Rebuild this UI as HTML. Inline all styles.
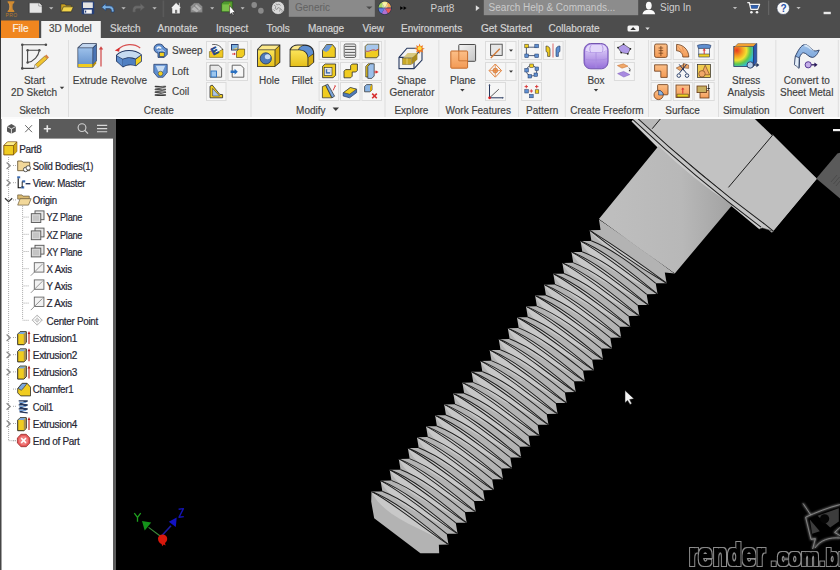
<!DOCTYPE html>
<html><head><meta charset="utf-8">
<style>
*{margin:0;padding:0;box-sizing:border-box}
html,body{width:840px;height:570px;overflow:hidden;background:#000}
body{position:relative;font-family:"Liberation Sans",sans-serif;font-size:10px}
.a{position:absolute}
</style></head>
<body>
<svg class="a" style="left:0;top:0" width="840" height="20" viewBox="0 0 840 20">
  <rect x="0" y="0" width="840" height="20" fill="#4d4d4d"/>
  <rect x="0" y="0" width="1" height="20" fill="#2c2c2c"/>
  <!-- inventor logo -->
  <path d="M7.6 1.2h6.8c.2 1.2-.4 2-1.6 2.8-.4 1.8-.4 3.6 0 5.4 1.2.8 1.8 1.6 1.6 2.6H7.6c-.2-1 .4-1.8 1.6-2.6.4-1.8.4-3.6 0-5.4-1.2-.8-1.8-1.6-1.6-2.8z" fill="#d08a30"/><path d="M9.6 3.6c.4 2 .4 4.4 0 6.2" stroke="#f0b060" stroke-width="0.6" fill="none"/>
  <text x="5.6" y="17.2" font-size="5" font-family="Liberation Sans" fill="#b57a30" letter-spacing="0.3">PRO</text>
  <!-- new -->
  <path d="M29.2 2.8h9.6l3.4 3.2v7.2H29.2z" fill="#e6e6e6" stroke="#262626" stroke-width="0.6"/>
  <path d="M38.8 2.8v3.2h3.4" fill="#fff" stroke="#555" stroke-width="0.5"/>
  <path d="M49 7.2h4.4l-2.2 2.3z" fill="#bcbcbc"/>
  <!-- open folder -->
  <path d="M60.8 4h4l1 1.2h5.4v6.6H60.8z" fill="#c9a020" stroke="#2a2a2a" stroke-width="0.6"/>
  <path d="M61.2 11.8l2.2-5h10l-2.2 5z" fill="#f2d44a" stroke="#2a2a2a" stroke-width="0.6"/>
  <!-- save -->
  <rect x="81.6" y="1.6" width="12.6" height="12.6" rx="1" fill="#26407a"/>
  <rect x="83" y="2.4" width="9.8" height="5.6" fill="#e4e4e4"/>
  <rect x="84.2" y="9.6" width="7.6" height="4" fill="#f4f4f4"/>
  <rect x="85" y="10.6" width="1.2" height="2" fill="#26407a"/>
  <!-- undo -->
  <path d="M101.6 7.2l4.2-3.6v2.2h3.6c2.8 0 4.6 1.8 4.6 4.6v1.6h-2.6v-1.4c0-1.2-.8-2-2-2h-3.6v2.2z" fill="#78aee0" stroke="#1e3c6c" stroke-width="0.7" stroke-linejoin="round"/>
  <path d="M121.4 7.2h4.3l-2.15 2.3z" fill="#bcbcbc"/>
  <!-- redo -->
  <path d="M144.6 7.2l-4.2-3.6v2.2h-3.6c-2.8 0-4 1.8-4 4.6v1.6h2.6v-1.4c0-1.2.4-2 1.6-2h3.4v2.2z" fill="#6a6a6a" stroke="#595959" stroke-width="0.5" stroke-linejoin="round"/>
  <path d="M152.4 7.2h4.3l-2.15 2.3z" fill="#bcbcbc"/>
  <rect x="162.6" y="0.5" width="1.6" height="16.6" fill="#5a5a5a"/>
  <!-- home -->
  <path d="M170.6 8.2l5.5-5.6 2.6 2.6V2.6h1.4v4l1.4 1.6h-1.4v5.6h-8.2V8.2z" fill="#f0f0f0" stroke="#2a2a2a" stroke-width="0.5"/>
  <rect x="175" y="9.8" width="2.2" height="4" fill="#777"/>
  <!-- gray icon -->
  <path d="M190.6 6.2l3.6-3.2h4.4l3.8 3.4v6h-11.8z" fill="#8e8e8e" stroke="#5a5a5a" stroke-width="0.5"/>
  <path d="M191.6 9.2l4.8-4.6 5 4.2-4.6 3.4z" fill="#b4b4b4"/>
  <path d="M194 5.6l4.6 4.4" stroke="#6a6a6a" stroke-width="0.8"/>
  <path d="M210.2 7.2h4l-2 2.2z" fill="#bcbcbc"/>
  <!-- green cube -->
  <path d="M221.4 3.4l2.8-2.2h8.4v8l-2.6 2.6h-8.6z" fill="#4f9a2f" stroke="#23461a" stroke-width="0.5"/>
  <rect x="222.2" y="4.4" width="7.6" height="6.8" fill="#7bc04a"/>
  <path d="M229.8 3.4v8l2.6-2.4" fill="none" stroke="#c8b020" stroke-width="0.8"/>
  <path d="M229.6 5.6v9.2l2-1.8 1.4 2.6 1-0.5-1.3-2.5 2.6-.2z" fill="#fff" stroke="#111" stroke-width="0.5"/>
  <path d="M240.6 7.2h4l-2 2.2z" fill="#bcbcbc"/>
  <!-- gray dots -->
  <ellipse cx="254.2" cy="5" rx="2.8" ry="3" fill="#8a8a8a"/>
  <ellipse cx="260.9" cy="10.7" rx="2.8" ry="3" fill="#8a8a8a"/>
  <!-- textured sphere -->
  <circle cx="278.1" cy="7.9" r="6.6" fill="#d8d8d8" stroke="#333" stroke-width="0.6"/>
  <path d="M274 5l2 1.5-1 2 2 1 1-2 2.5 1-1 3M276 3.5l1 1.5 2-1 1.5 1.5M281 9l1.5 2-1.5 1.5M273.5 9.5l1.5 1.5" fill="none" stroke="#888" stroke-width="0.8"/>
  <!-- generic -->
  <rect x="288.8" y="0" width="86" height="16.8" fill="#8a8a8a"/>
  <text x="295" y="11" font-size="10" font-family="Liberation Sans" fill="#626262">Generic</text>
  <path d="M366.2 6.4h6.2l-3.1 2.8z" fill="#4a4a4a"/>
  <!-- color wheel -->
  <circle cx="384.8" cy="7.9" r="6.8" fill="#1c2a4a"/>
  <path d="M384.8 7.9L378.6 7.9A6.2 6.2 0 0 1 381.7 2.5z" fill="#a8d860"/>
  <path d="M384.8 7.9L381.7 2.5A6.2 6.2 0 0 1 387.9 2.5z" fill="#f4ec80"/>
  <path d="M384.8 7.9L387.9 2.5A6.2 6.2 0 0 1 391 7.9z" fill="#f4a850"/>
  <path d="M384.8 7.9L391 7.9A6.2 6.2 0 0 1 387.9 13.3z" fill="#e85858"/>
  <path d="M384.8 7.9L387.9 13.3A6.2 6.2 0 0 1 381.7 13.3z" fill="#b070d0"/>
  <path d="M384.8 7.9L381.7 13.3A6.2 6.2 0 0 1 378.6 7.9z" fill="#6080e0"/>
  <path d="M378.6 7.9h12.4" stroke="#203070" stroke-width="0.8"/>
  <circle cx="384.8" cy="5.6" r="3" fill="#fff" opacity="0.35"/>
  <path d="M400.2 6.2l3 1.9-3 1.9zM403.6 6.2l3 1.9-3 1.9z" fill="#000"/>
  <text x="430.5" y="12" font-size="10" font-family="Liberation Sans" fill="#cfcfcf">Part8</text>
  <path d="M475.8 5.2l3.8 2.9-3.8 2.9z" fill="#e0e0e0"/>
  <!-- search -->
  <rect x="483.8" y="0" width="154.4" height="15.2" fill="#8c8c8c"/>
  <text x="488.6" y="11" font-size="10" font-family="Liberation Sans" fill="#cacaca">Search Help &amp; Commands...</text>
  <!-- person -->
  <ellipse cx="648.8" cy="5.6" rx="2.9" ry="3.9" fill="#fafafa"/>
  <path d="M642.4 14.2c.6-3 2.8-4.4 6.4-4.4s5.8 1.4 6.4 4.4z" fill="#fafafa"/>
  <text x="660" y="11.4" font-size="10" font-family="Liberation Sans" fill="#d0d0d0">Sign In</text>
  <path d="M732.9 7h4.2l-2.1 2.3z" fill="#bcbcbc"/>
  <!-- cart -->
  <path d="M747.3 2.6h2l1.6 6.6h6.8l1.8-4.8h-9.4" fill="none" stroke="#f4f4f4" stroke-width="1.4" stroke-linejoin="round"/>
  <path d="M750.6 5.2h8l-1.2 3.2h-6z" fill="#3060b0"/>
  <circle cx="751.4" cy="12.2" r="1.3" fill="#f4f4f4"/>
  <circle cx="757" cy="12.2" r="1.3" fill="#f4f4f4"/>
  <rect x="768.2" y="0.5" width="1" height="14.5" fill="#6a6a6a"/>
  <!-- help -->
  <circle cx="783.2" cy="8.2" r="6.3" fill="#f8f8f8" stroke="#26334a" stroke-width="0.6"/>
  <text x="780.4" y="12.2" font-size="10" font-weight="bold" font-family="Liberation Sans" fill="#1f4fa8">?</text>
  <path d="M796.4 7h4.3l-2.15 2.3z" fill="#bcbcbc"/>
  <rect x="823.6" y="11.8" width="7.2" height="2.4" fill="#e8e8e8"/>
</svg>
<svg class="a" style="left:0;top:20px" width="840" height="18" viewBox="0 20 840 18" font-family="Liberation Sans" font-size="10">
  <rect x="0" y="20" width="840" height="18" fill="#4d4d4d"/>
  <rect x="0" y="20" width="1" height="18" fill="#2c2c2c"/>
  <rect x="1" y="20.5" width="38" height="17.5" fill="#f0861f"/>
  <rect x="41.2" y="21" width="59.6" height="17" fill="#f3f3f3"/>
  <g fill="#d4d4d4" stroke="#d4d4d4" stroke-width="0.2">
    <text x="12.5" y="32.2" fill="#fbf0e2" stroke="#fbf0e2">File</text>
    <text x="49" y="32.2" fill="#4a4a4a" stroke="#4a4a4a">3D Model</text>
    <text x="110" y="32.2">Sketch</text>
    <text x="157.5" y="32.2">Annotate</text>
    <text x="216" y="32.2">Inspect</text>
    <text x="266.5" y="32.2">Tools</text>
    <text x="308" y="32.2">Manage</text>
    <text x="362.5" y="32.2">View</text>
    <text x="401" y="32.2">Environments</text>
    <text x="481" y="32.2">Get Started</text>
    <text x="548.5" y="32.2">Collaborate</text>
  </g>
  <rect x="627.5" y="25.5" width="11.5" height="6" rx="1.5" fill="#f4f4f4"/>
  <path d="M630.3 30h5.6l-2.8-3z" fill="#333"/>
  <path d="M645.3 27.6h4.4l-2.2 2.4z" fill="#e0e0e0"/>
</svg>

<svg class="a" style="left:0;top:0" width="840" height="120" viewBox="0 0 840 120" font-family="Liberation Sans" font-size="10">
  <rect x="0" y="38" width="840" height="79" fill="#f3f3f3"/>
  <rect x="0" y="117" width="840" height="2" fill="#fcfcfc"/>
  <rect x="0" y="38" width="1" height="81" fill="#3a3a3a"/>
  <!-- separators -->
  <g fill="#dedede">
    <rect x="68" y="40" width="1" height="77"/>
    <rect x="250.5" y="40" width="1" height="77"/>
    <rect x="384.5" y="40" width="1" height="77"/>
    <rect x="438.3" y="40" width="1" height="77"/>
    <rect x="518" y="40" width="1" height="77"/>
    <rect x="564.8" y="40" width="1" height="77"/>
    <rect x="648" y="40" width="1" height="77"/>
    <rect x="718" y="40" width="1" height="77"/>
    <rect x="775.3" y="40" width="1" height="77"/>
    <rect x="837.8" y="40" width="1" height="77"/>
  </g>
  <!-- small button frames -->
  <g fill="#f6f6f6" stroke="#dcdcdc" stroke-width="1">
    <rect x="206.5" y="41.5" width="19.5" height="18"/>
    <rect x="228" y="41.5" width="19.5" height="18"/>
    <rect x="206.5" y="62.5" width="19.5" height="18"/>
    <rect x="228" y="62.5" width="19.5" height="18"/>
    <rect x="206.5" y="82.5" width="19.5" height="18"/>

    <rect x="319.1" y="41.5" width="19.5" height="18"/>
    <rect x="340.5" y="41.5" width="19.5" height="18"/>
    <rect x="362" y="41.5" width="19.5" height="18"/>
    <rect x="319.1" y="62.5" width="19.5" height="18"/>
    <rect x="340.5" y="62.5" width="19.5" height="18"/>
    <rect x="362" y="62.5" width="19.5" height="18"/>
    <rect x="319.1" y="82.5" width="19.5" height="18"/>
    <rect x="340.5" y="82.5" width="19.5" height="18"/>
    <rect x="362" y="82.5" width="19.5" height="18"/>

    <rect x="485.5" y="41.5" width="30.5" height="18"/>
    <rect x="485.5" y="62.5" width="30.5" height="18"/>
    <rect x="485.5" y="82.5" width="20" height="18"/>

    <rect x="521.7" y="41.5" width="19.8" height="18"/>
    <rect x="543.3" y="41.5" width="19.8" height="18"/>
    <rect x="521.7" y="62.5" width="19.8" height="18"/>
    <rect x="521.7" y="82.5" width="19.8" height="18"/>

    <rect x="614.4" y="41.5" width="20" height="18"/>
    <rect x="614.4" y="62.5" width="20" height="18"/>

    <rect x="651.1" y="41.5" width="20" height="18"/>
    <rect x="673.3" y="41.5" width="19.5" height="18"/>
    <rect x="694.2" y="41.5" width="20" height="18"/>
    <rect x="651.1" y="62.5" width="20" height="18"/>
    <rect x="673.3" y="62.5" width="19.5" height="18"/>
    <rect x="694.2" y="62.5" width="20" height="18"/>
    <rect x="651.1" y="82.5" width="20" height="18"/>
    <rect x="673.3" y="82.5" width="19.5" height="18"/>
    <rect x="694.2" y="82.5" width="20" height="18"/>
  </g>
  <g fill="#dcdcdc">
    <rect x="505.2" y="42" width="1" height="17"/>
    <rect x="505.2" y="63" width="1" height="17"/>
  </g>

  <!-- texts -->
  <g fill="#404040" stroke="#404040" stroke-width="0.15" text-anchor="middle">
    <text x="34.5" y="83.8">Start</text>
    <text x="34" y="96.1">2D Sketch</text>
    <text x="34.5" y="114">Sketch</text>
    <text x="90" y="83.8">Extrude</text>
    <text x="129" y="83.8">Revolve</text>
    <text x="158.8" y="114">Create</text>
    <text x="269.2" y="83.8">Hole</text>
    <text x="302.3" y="83.8">Fillet</text>
    <text x="310.8" y="114">Modify</text>
    <text x="411.6" y="83.8">Shape</text>
    <text x="412" y="96.1">Generator</text>
    <text x="411.4" y="114">Explore</text>
    <text x="462.8" y="83.8">Plane</text>
    <text x="478.2" y="114">Work Features</text>
    <text x="542.2" y="114">Pattern</text>
    <text x="596" y="83.8">Box</text>
    <text x="606.9" y="114">Create Freeform</text>
    <text x="682.6" y="114">Surface</text>
    <text x="746.2" y="83.8">Stress</text>
    <text x="746.2" y="96.1">Analysis</text>
    <text x="746.3" y="114">Simulation</text>
    <text x="806.7" y="83.8">Convert to</text>
    <text x="806.7" y="96.1">Sheet Metal</text>
    <text x="806.6" y="114">Convert</text>
  </g>
  <g fill="#404040" stroke="#404040" stroke-width="0.15">
    <text x="172" y="54.3">Sweep</text>
    <text x="172" y="75.2">Loft</text>
    <text x="172" y="95.3">Coil</text>
  </g>
  <!-- dropdown arrows -->
  <g fill="#3a3a3a">
    <path d="M59.8 86.8h4.4l-2.2 2.4z"/>
    <path d="M332.6 107.6h6.4l-3.2 3.4z"/>
    <path d="M460.2 89h4.4l-2.2 2.4z"/>
    <path d="M593.8 89h4.4l-2.2 2.4z"/>
    <path d="M509 49.5h4l-2 2.2z"/>
    <path d="M509 70.5h4l-2 2.2z"/>
  </g>
</svg>

<svg class="a" style="left:0;top:0" width="840" height="120" viewBox="0 0 840 120">
  <defs>
    <linearGradient id="gBlue" x1="0" y1="0" x2="0" y2="1"><stop offset="0" stop-color="#9cc0ea"/><stop offset="1" stop-color="#6a96cf"/></linearGradient>
    <linearGradient id="gYel" x1="0" y1="0" x2="0" y2="1"><stop offset="0" stop-color="#fbe45a"/><stop offset="1" stop-color="#e6c01a"/></linearGradient>
    <linearGradient id="gOr" x1="0" y1="0" x2="0" y2="1"><stop offset="0" stop-color="#fbbf88"/><stop offset="1" stop-color="#f39a55"/></linearGradient>
    <linearGradient id="gPur" x1="0" y1="0" x2="0" y2="1"><stop offset="0" stop-color="#d6c4f6"/><stop offset="1" stop-color="#9d78dc"/></linearGradient>
    <linearGradient id="gGray" x1="0" y1="0" x2="1" y2="1"><stop offset="0" stop-color="#f4f4f4"/><stop offset="1" stop-color="#c4c4c4"/></linearGradient>
    <radialGradient id="gStress" cx="0.15" cy="0.2" r="1.1"><stop offset="0" stop-color="#e83a20"/><stop offset="0.25" stop-color="#f59a20"/><stop offset="0.45" stop-color="#f2e030"/><stop offset="0.62" stop-color="#5cc850"/><stop offset="0.8" stop-color="#30b8e0"/><stop offset="1" stop-color="#2050c0"/></radialGradient>
  </defs>
  <!-- Start 2D Sketch -->
  <g stroke="#4a4a4a" stroke-width="1.1" fill="none">
    <path d="M45.9 44.8H22.3V68.4H34"/>
    <path d="M39.4 50.2H27.6V62.5M39.4 50.2C38.5 56 34 61.5 27.6 62.5"/>
  </g>
  <g fill="#4a4a4a">
    <circle cx="22.3" cy="44.8" r="1.3"/><circle cx="45.9" cy="44.8" r="1.3"/><circle cx="22.3" cy="68.4" r="1.3"/>
    <circle cx="27.6" cy="50.2" r="1.2"/><circle cx="39.4" cy="50.2" r="1.2"/><circle cx="27.6" cy="62.5" r="1.2"/>
  </g>
  <path d="M34.2 68.2l1-3.6 9.6-8.6 2.6 2.8-9.6 8.6z" fill="#f0c430" stroke="#6a5020" stroke-width="0.6"/>
  <path d="M44.8 56l1.6-1.4 2.6 2.8-1.6 1.4z" fill="#d88040"/>
  <path d="M34.2 68.2l1-3.6 2.6 2.8z" fill="#f4f4f4" stroke="#777" stroke-width="0.4"/>

  <!-- Extrude -->
  <path d="M77.5 47.5l4.8-4.3h14.5v17.4l-3.8 6.8H77.5z" fill="#2a3a58"/>
  <path d="M78.2 48l4.4-4h13.6l-3.6 3.6H78.2z" fill="#c2d6ef"/>
  <rect x="78.2" y="48.2" width="14.3" height="15.8" fill="url(#gBlue)"/>
  <path d="M93.2 48l3-3v16l-3 3z" fill="#4a74b4"/>
  <rect x="78.2" y="64" width="14.3" height="3" fill="#f0cc20"/>
  <path d="M93.2 64l3-3v2.6l-3 3.4z" fill="#b89010"/>
  <path d="M101 66.4V48.2" stroke="#d04545" stroke-width="1.2"/>
  <path d="M98.8 49.6l2.2-3.4 2.2 3.4z" fill="#d04545"/>

  <!-- Revolve -->
  <path d="M118.2 49.6C124 43.4 134 43.2 140.2 48" stroke="#d85050" stroke-width="1.2" fill="none"/>
  <path d="M114.8 50.4l4.8-2.8-0.4 4.2z" fill="#d83030"/>
  <path d="M116 55C122 48.5 135 48.5 141.8 54.5V61.4L136 66.2C131 64.5 127 64.8 123 67.6L116 61.2z" fill="#1f3560"/>
  <path d="M116.8 55.4C122.5 49.6 134.8 49.6 141 54.8L135.6 58.6C131 56.6 127 56.8 122.6 58.8z" fill="#c6dbf0"/>
  <path d="M116.8 56L122.6 59.4V66.4L116.8 61z" fill="#5e8ccb"/>
  <path d="M122.8 59.6C127 57.6 131 57.6 135.4 59.6V65.5C131 64 127.2 64.2 122.8 66.6z" fill="#4f7fc2"/>
  <path d="M135.8 59.4L141 55.6V61.2L135.8 65.6z" fill="#f2d020"/>

  <!-- Sweep -->
  <path d="M154 48.6c0-3 2.3-4.6 5-4.6 2.4 0 4.2 1.2 4.8 3l2.4 1.8h1v5.6l-3 3h-6.2v-4.2c-2.4-.6-4-2.2-4-4.6z" fill="#5f8fd0" stroke="#1f3562" stroke-width="0.8" stroke-linejoin="round"/>
  <path d="M156.2 48.6c.2-1.6 1.4-2.4 2.8-2.4 1.6 0 2.6 1 2.6 2.2l-1.8.4c-.2-.6-.6-.8-1-.8-.6 0-1 .4-1 .9z" fill="#eef4fb"/>
  <path d="M157.6 50.6c1.4.6 3 .2 4.4-.8l2.6 1.8" stroke="#dfe9f6" stroke-width="0.9" fill="none"/>
  <rect x="159.6" y="52.4" width="4.6" height="4.2" fill="#f2d020" stroke="#1f3562" stroke-width="0.6"/>
  <!-- Loft -->
  <path d="M153.8 64.3h13.4v8.2l-4 4.8h-5.4l-4-4.8z" fill="#5f8fd0" stroke="#1f3562" stroke-width="0.7"/>
  <path d="M155.8 65.8h9.4l-2.6 6h-4.2z" fill="#c8dcf2"/>
  <circle cx="160.5" cy="73.6" r="2.4" fill="#f2d020" stroke="#1f3562" stroke-width="0.5"/>
  <!-- Coil -->
  <g fill="none" stroke-linecap="round">
    <path d="M155.4 86.6c3 .2 7 .2 10 0M155.4 89.4c3 .2 7 .2 10 0M155.4 92.2c3 .2 7 .2 10 0M155.4 95c3 .2 7 .2 10 0" stroke="#3a3a3a" stroke-width="1.5"/>
    <path d="M165.4 86.6l-10 2.8M165.4 89.4l-10 2.8M165.4 92.2l-10 2.8" stroke="#5a5a5a" stroke-width="1.2"/>
    <path d="M157 87.8l6-1.2M157 90.6l6-1.2M157 93.4l6-1.2" stroke="#b8b8b8" stroke-width="0.6"/>
  </g>

  <!-- Create small icons -->
  <!-- emboss -->
  <path d="M209.4 57.4V51.6c2.6-1 5.4-.6 7.6 1.2l5.9-3.8c.2 2.6.2 5.4 0 8.4z" fill="#f0c820" stroke="#5a4a10" stroke-width="0.5"/>
  <path d="M212.2 44.6c4.6-.8 8.8 1.4 10.6 5.4" stroke="#3a3a3a" stroke-width="0.8" fill="none"/>
  <text x="0" y="0" transform="translate(213.2,55.6) rotate(-28)" font-family="Liberation Sans" font-weight="bold" font-size="10" fill="#1f4fa8" stroke="#1f3f80" stroke-width="0.6">E</text>
  <!-- derive -->
  <rect x="231" y="44" width="7.5" height="6.5" fill="#2a3e70"/>
  <rect x="232" y="45" width="5.5" height="4.5" fill="#e8d070"/>
  <path d="M232 45h5.5v2.5l-5.5 2z" fill="#7ab0e0"/>
  <path d="M236.5 51.5l2.5-2.4h5.6v5.8l-2.4 2.6h-5.7z" fill="#f0cc20" stroke="#3a3010" stroke-width="0.6"/>
  <path d="M234 52.6l1.8 1.4-1.8 1.3z" fill="#e03030"/><path d="M232 54h2.5" stroke="#e03030" stroke-width="0.9"/>
  <!-- import -->
  <path d="M210 65.2h8.6l3 3v9h-11.6z" fill="#e8e8e8" stroke="#555" stroke-width="0.9"/>
  <rect x="211" y="71" width="5.5" height="6" fill="#9cc6ee" stroke="#2a70c0" stroke-width="0.9"/>
  <!-- place -->
  <path d="M232.2 65.2h8.6l3 3v9h-11.6z" fill="#f6f6f6" stroke="#555" stroke-width="0.9"/>
  <path d="M230.6 70.6h4v-1.8l3.2 3-3.2 3v-1.8h-4z" fill="#2a70c0"/>
  <!-- rib -->
  <path d="M210 86.2l2.2-1.2 7.6 9.4 2.8.2v3.2H210z" fill="#f0cc20" stroke="#2a2a2a" stroke-width="0.8"/>
  <path d="M212.6 88.4l7 7.6h-7z" fill="#a8c4e8" stroke="#2a2a2a" stroke-width="0.5"/>

  <!-- Hole -->
  <path d="M257.1 49.3l4.6-4.7h18.6v17.8l-5.4 4.7H257.1z" fill="#2a2a2a"/>
  <path d="M258 49.4l4-3.8h17l-4.2 3.8z" fill="#fbe88a"/>
  <rect x="258" y="50.2" width="16.6" height="16.1" fill="url(#gYel)"/>
  <path d="M275.4 49.6l4-3.6v16.2l-4 3.6z" fill="#d6ac10"/>
  <circle cx="265.8" cy="58.4" r="5.6" fill="#4e7ab8" stroke="#1f3562" stroke-width="0.8"/>
  <ellipse cx="267.6" cy="56.8" rx="2.8" ry="2.5" fill="#c8dcf2"/>
  <!-- Fillet -->
  <path d="M289.6 49.3c2-3.2 4.4-4.7 8-4.7h7.6c5.2 0 9 3.6 9 9v8.6l-5.4 4.9H289.6z" fill="#2a2a2a"/>
  <path d="M290.5 50.2h8.8c4.6 0 8 3 8.2 7.8v8.3h-17z" fill="url(#gYel)"/>
  <path d="M290.8 49.4c1.8-2.8 4-3.8 7-3.8h5.4c-2.6 .6-4.3 1.8-5 3.8z" fill="#fbe88a"/>
  <path d="M298.8 49.6c.8-2.4 3-3.8 6-3.8 4.8 0 8.4 3 8.4 7.8l-5 3.6c-.2-4.4-3.6-7.4-9.4-7.6z" fill="#5f8fd0"/>
  <path d="M308.4 57.4l4.8-3.2v8.2l-4.8 3.8z" fill="#d6ac10"/>

  <!-- Modify small icons -->
  <!-- chamfer -->
  <path d="M322.5 50.2l4-5.6h6l2.8 3.4v9.4h-12.8z" fill="#f0cc20" stroke="#2a2a2a" stroke-width="0.8"/>
  <path d="M322.8 50.2l3.8-5.3h5.8l-3.8 5.6 -2.5 1.6z" fill="#6a98d6"/>
  <!-- thread -->
  <g stroke="#555" stroke-width="0.9" fill="#ececec"><rect x="344.2" y="44" width="11.5" height="13.5" rx="1.5"/></g>
  <path d="M345 46.4h10M345 49.4h10M345 52.4h10M345 55.2h10" stroke="#5a5a5a" stroke-width="1"/>
  <!-- split -->
  <path d="M365.2 46.5l2-2.2h11.5v11.3l-2 2.2h-11.5z" fill="#f0cc20" stroke="#2a2a2a" stroke-width="0.8"/>
  <path d="M365.7 46.6l2-2h10.6v5l-3 1.5c-2-1-4-.2-6 .6-1.4.6-2.6.6-3.6.2z" fill="#a6c6ec"/>
  <path d="M365.6 51c1.4.5 2.6.5 4-.1 2-.8 4-1.6 6.2-.4l3-1.5" stroke="#c83a20" stroke-width="0.9" fill="none"/>
  <!-- shell -->
  <path d="M322.6 66.2l2.6-2.2h10.4v11.4l-2.6 2.3h-10.4z" fill="#f0cc20" stroke="#2a2a2a" stroke-width="0.8"/>
  <rect x="324.2" y="67.6" width="7.8" height="7.8" fill="#e8e8e8" stroke="#2a2a2a" stroke-width="0.6"/>
  <rect x="325.8" y="69.2" width="4.4" height="4.4" fill="#3a6ab0"/><rect x="327.2" y="69.2" width="3" height="3" fill="#e8e8e8"/>
  <!-- combine -->
  <path d="M344 71.2l1.6-1.6h5v-4l1.6-1.6h5.2v6.4l-1.6 1.6h-3.6v4.2l-1.6 1.6h-6.6z" fill="#f0cc20" stroke="#2a2a2a" stroke-width="0.8"/>
  <!-- direct edit -->
  <path d="M365.8 66.4l2.4-2.6h4.4v13.2h-6.8z" fill="#f0cc20" stroke="#2a2a2a" stroke-width="0.7"/>
  <path d="M367.8 66.4l2.4-2.6h4v12.2l-2.4 2.4h-4z" fill="#9cc0ea" stroke="#2a2a2a" stroke-width="0.7"/>
  <path d="M375.6 70.2l3 1.8-3 1.8z" fill="#d83030"/><path d="M374.2 72h2" stroke="#d83030" stroke-width="1"/>
  <!-- draft -->
  <path d="M322.4 86.6l3.4-1.4 6 12.6h-9.4z" fill="#f0cc20" stroke="#2a2a2a" stroke-width="0.7"/>
  <path d="M325.6 85.2l2.2-1 6.8 12-2.6 1.6z" fill="#7aa6dc" stroke="#2a2a2a" stroke-width="0.7"/>
  <path d="M333.2 90.4l1.8-4.2" stroke="#d83030" stroke-width="0.9"/><path d="M334.2 85.2l1.6.2-.4 1.8z" fill="#d83030"/>
  <!-- thicken -->
  <path d="M343.2 92.8l7-5.2 6.4 1.6v3.4l-7 5.2-6.4-1.8z" fill="#4e7ab8" stroke="#1f3562" stroke-width="0.7"/>
  <path d="M343.6 92.6l6.8-5 6 1.6-6.8 5z" fill="#f2d020" stroke="#2a2a2a" stroke-width="0.5"/>
  <!-- delete face -->
  <path d="M364.6 86.4l2-1.8h5.4v5.4l-2 1.8h-5.4z" fill="#8ab4e4" stroke="#2a2a2a" stroke-width="0.7"/>
  <path d="M370 86.4l2-1.8v5.4l-2 1.8z" fill="#d6ac10"/>
  <path d="M372.2 93.6l4.6 4.6M376.8 93.6l-4.6 4.6" stroke="#d83030" stroke-width="1.6"/>

  <!-- Shape generator -->
  <path d="M399 57.4l8-9.2h15v11.8l-8 8.6H399z" fill="none" stroke="#26385e" stroke-width="1.1"/>
  <path d="M399 57.4h15v10.8M414 57.4l8-9.2" fill="none" stroke="#26385e" stroke-width="1.1"/>
  <path d="M403.2 57.8l4.4-4.8h9.8l-4.4 4.8z" fill="#d8c880"/>
  <rect x="402.6" y="58.2" width="8.8" height="6.2" fill="#c8a828" stroke="#6a5a20" stroke-width="0.5"/>
  <path d="M411.8 58l5.6-5v6.4l-5.6 5z" fill="#a88a20"/>
  <path d="M407 58.4v6" stroke="#f0e090" stroke-width="0.7"/>
  <g fill="#f07820">
    <path d="M419.6 43.6l1 2.6 2.6-1-1 2.6 2.6 1-2.6 1 1 2.6-2.6-1-1 2.6-1-2.6-2.6 1 1-2.6-2.6-1 2.6-1-1-2.6 2.6 1z"/>
  </g>
  <circle cx="419.6" cy="48.2" r="2" fill="#fce040"/>

  <!-- Plane -->
  <rect x="458.8" y="44.5" width="16.8" height="16.8" rx="0.8" fill="url(#gGray)" stroke="#4a4a4a" stroke-width="1"/>
  <rect x="450.8" y="51" width="16.8" height="17.2" rx="0.8" fill="url(#gOr)" stroke="#c46a2a" stroke-width="1"/>
  <path d="M458.8 51v9.8h8.8" fill="none" stroke="#c46a2a" stroke-width="0.8"/>

  <!-- Work features small -->
  <rect x="490.6" y="44.2" width="11.6" height="11.2" fill="#e6e6e6" stroke="#4a4a4a" stroke-width="0.9"/>
  <path d="M490.8 58l9-9.2" stroke="#d07a3a" stroke-width="1.4"/>
  <path d="M495.3 64l6.2 6.6-6.2 6.6-6.2-6.6z" fill="none" stroke="#e0803a" stroke-width="1"/>
  <circle cx="495.3" cy="70.6" r="2.4" fill="#f0a060" stroke="#c06020" stroke-width="0.6"/>
  <path d="M489.2 70.6h12.3M495.3 64.4v12.4" stroke="#e0803a" stroke-width="0.7"/>
  <path d="M489.5 85.2v12.6h13.2" fill="none" stroke="#26385e" stroke-width="1"/>
  <path d="M489.8 97.6l9-8.4" stroke="#333" stroke-width="0.8"/>
  <path d="M488.4 85.6l1.1-1.6 1.1 1.6zM502.4 96.7l1.4 1.1-1.4 1.1z" fill="#26385e"/>
  <circle cx="489.6" cy="97.8" r="1.4" fill="#e02020"/>

  <!-- Pattern -->
  <path d="M526.4 47.2h10.6M526.4 47.2v8.4M526.4 55.6h10.6" stroke="#26385e" stroke-width="0.8"/>
  <rect x="524.8" y="44.2" width="3.6" height="3.6" fill="#f2d020" stroke="#2a2a2a" stroke-width="0.5"/>
  <rect x="534.8" y="44.2" width="3.8" height="3.6" fill="#5f8fd0" stroke="#1f3562" stroke-width="0.5"/>
  <rect x="524.8" y="54" width="3.6" height="3.6" fill="#5f8fd0" stroke="#1f3562" stroke-width="0.5"/>
  <rect x="534.8" y="54" width="3.8" height="3.6" fill="#5f8fd0" stroke="#1f3562" stroke-width="0.5"/>
  <!-- mirror -->
  <path d="M546 46c2.4 0 4 1.4 4 3.6v6.8h-2.4v-4c-1 0-1.6-.8-1.6-2z" fill="#f0cc20" stroke="#2a2a2a" stroke-width="0.6"/>
  <path d="M560 46c-2.4 0-4 1.4-4 3.6v6.8h2.4v-4c1 0 1.6-.8 1.6-2z" fill="#5f8fd0" stroke="#1f3562" stroke-width="0.6"/>
  <path d="M553 43.6v14" stroke="#e08080" stroke-width="1.2"/>
  <!-- circular -->
  <circle cx="531.6" cy="70.8" r="5.2" fill="none" stroke="#26385e" stroke-width="0.8"/>
  <rect x="529.8" y="64" width="3.6" height="3.4" fill="#f2d020" stroke="#2a2a2a" stroke-width="0.5"/>
  <rect x="535" y="67" width="3.6" height="3.4" fill="#5f8fd0" stroke="#1f3562" stroke-width="0.5"/>
  <rect x="534" y="73" width="3.6" height="3.4" fill="#5f8fd0" stroke="#1f3562" stroke-width="0.5"/>
  <rect x="528" y="74.6" width="3.6" height="3.4" fill="#5f8fd0" stroke="#1f3562" stroke-width="0.5"/>
  <rect x="524.8" y="68.6" width="3.6" height="3.4" fill="#5f8fd0" stroke="#1f3562" stroke-width="0.5"/>
  <!-- sketch driven -->
  <g stroke="#d83030" stroke-width="0.9"><path d="M524.6 86.6h3.4M526.3 84.9v3.4M535 86.6h3.4M536.7 84.9v3.4M529.6 91h3.4M531.3 89.3v3.4"/></g>
  <rect x="524.8" y="89.6" width="3.6" height="3.4" fill="#5f8fd0" stroke="#1f3562" stroke-width="0.5"/>
  <rect x="535.2" y="89.8" width="3.6" height="3.4" fill="#f2d020" stroke="#2a2a2a" stroke-width="0.5"/>
  <rect x="529.6" y="94.4" width="3.6" height="3.4" fill="#5f8fd0" stroke="#1f3562" stroke-width="0.5"/>

  <!-- Box freeform -->
  <path d="M584 51.5c0-4 2-7.5 6.5-8h10c4.6 0 7.6 3 7.6 7v10.5c0 4.6-2.4 7.4-6.6 7.8h-10.6c-4.6-.2-6.9-3.2-6.9-7.4z" fill="#9a78dc" stroke="#6a4aa8" stroke-width="0.9"/>
  <path d="M585.2 50.8c.6-3.6 2.6-6 6-6.2h9.6c3.4 0 5.6 1.8 6.4 4.8-1.6 1.6-3.6 2.6-6.4 2.8h-9.6c-2.6-.1-4.6-.5-6-1.4z" fill="#e2d6fa"/>
  <path d="M585.2 51c1.4.9 3.4 1.4 6 1.4h9.6c2.8-.2 4.8-1.2 6.4-2.8v10.8c0 3.6-2 6-5.6 6.4h-10.4c-3.8-.2-5.8-2.4-6-5.6z" fill="url(#gPur)"/>
  <path d="M585.6 59.4c4 1 17 1 21.4-.6M596 52.6v15.2M591.2 45.2c-1.6 2-1.8 4.6-.6 7.2M601.8 45c1.4 2 1.6 4.6.4 7.2" stroke="#a88ae0" stroke-width="0.8" fill="none"/>
  <!-- freeform small -->
  <path d="M618 47.6l5.6-3.4 6.8 4.6-2.6 5-6.6-1.2z" fill="#b09ae8" stroke="#3a3a3a" stroke-width="0.6"/>
  <g fill="#222"><circle cx="618" cy="47.6" r="0.9"/><circle cx="623.6" cy="44.2" r="0.9"/><circle cx="630.4" cy="48.8" r="0.9"/><circle cx="627.8" cy="53.8" r="0.9"/><circle cx="621.2" cy="52.6" r="0.9"/></g>
  <path d="M617.4 65.6l6-1.8 4.6 2.4-6 2z" fill="#f0a868" stroke="#c06a30" stroke-width="0.5"/>
  <path d="M617.6 73.6l6-2.2 6.2 3.2-6 2.4z" fill="#a88ae0" stroke="#7a58b8" stroke-width="0.5"/>
  <path d="M628.6 67.8c1.6.6 2 2 1 3.2" stroke="#333" stroke-width="0.7" fill="none"/><path d="M628.6 71l1.8.4-.6-1.6z" fill="#333"/>

  <!-- Surface -->
  <g stroke="#6a3a18" stroke-width="0.8">
    <rect x="654.6" y="44" width="12.6" height="13.4" rx="1.6" fill="url(#gOr)"/>
    <path d="M676.6 44.4c6 0 12.2 5 12.2 12.6h-6c0-3.6-2.6-6.2-6.2-6.2z" fill="url(#gOr)"/>
    <path d="M654.6 64.8h12.6v12.6h-6.4v-6.2h-6.2z" fill="url(#gOr)"/>
    <rect x="657.6" y="84.6" width="10.4" height="10.2" rx="0.8" fill="url(#gOr)"/><circle cx="658.6" cy="95" r="4.6" fill="url(#gOr)"/>
    <rect x="676" y="85" width="13.4" height="12.4" fill="url(#gOr)"/>
    <rect x="700" y="90.6" width="9" height="7.4" fill="url(#gOr)"/>
    <rect x="697" y="86" width="9.6" height="6.6" fill="#c8b060"/>
  </g>
  <path d="M660.9 46v10" stroke="#6a3a18" stroke-width="0.8"/>
  <path d="M658.6 48h4.6M658.6 50.6h4.6M658.6 53.2h4.6" stroke="#6a3a18" stroke-width="0.7"/>
  <path d="M677.4 45.6l4.8 6.6M682 46.8l1.6 4.6" stroke="#e88a4a" stroke-width="0.7"/>
  <path d="M658.6 90.4a4.6 4.6 0 0 1 4.6 4.6h-4.6z" fill="#8ab8e8" stroke="#26385e" stroke-width="0.6"/>
  <!-- patch -->
  <path d="M697.4 45.4c3-1.4 10.6-1.4 13.6 0l-1 3h-11.6z" fill="#5f8fd0" stroke="#26385e" stroke-width="0.6"/>
  <rect x="698.8" y="48.4" width="10.8" height="6.4" fill="#f6f6f6" stroke="#26385e" stroke-width="0.6"/>
  <rect x="698.8" y="54" width="10.8" height="3" fill="#f2d020" stroke="#26385e" stroke-width="0.6"/>
  <path d="M704.2 54v-4.6" stroke="#d83030" stroke-width="1"/><path d="M702.6 50.6l1.6-2 1.6 2z" fill="#d83030"/>
  <!-- trim -->
  <path d="M676.2 68l8-3.8 1.2 2.6-5.4 3.8z" fill="#f0a868" stroke="#6a3a18" stroke-width="0.5"/>
  <path d="M683.4 63.4v7" stroke="#333" stroke-width="0.8"/><path d="M683.6 63.6l5 1.4v3.4l-5-.6z" fill="#f0a868" stroke="#6a3a18" stroke-width="0.5"/>
  <path d="M679.2 64.4l7.4 9M686.6 64.4l-7.4 9" stroke="#1f3562" stroke-width="1"/>
  <circle cx="678.8" cy="75.6" r="1.8" fill="none" stroke="#1f3562" stroke-width="0.9"/>
  <circle cx="687" cy="75.6" r="1.8" fill="none" stroke="#1f3562" stroke-width="0.9"/>
  <!-- sculpt -->
  <rect x="697.4" y="64.6" width="13.2" height="13" fill="#f0cc50" stroke="#2a2a2a" stroke-width="0.7"/>
  <path d="M705.2 65.2l4.4 9.6h-8.4z" fill="#f0a868" stroke="#6a3a18" stroke-width="0.6"/>
  <circle cx="702" cy="73.8" r="3.2" fill="#f0a868" stroke="#6a3a18" stroke-width="0.6"/>
  <!-- extend -->
  <path d="M677 94.2h11.4v2.8H677z" fill="#f2d020" stroke="#2a2a2a" stroke-width="0.5"/>
  <path d="M682.8 93.6V88.6" stroke="#d83030" stroke-width="1"/><path d="M681.2 89.6l1.6-2 1.6 2z" fill="#d83030"/>
  <path d="M708.6 84.2v4.6" stroke="#222" stroke-width="0.8"/><path d="M707 88l1.6 2 1.6-2z" fill="#222"/>

  <!-- Stress analysis -->
  <path d="M733.8 47.4l4-4h19l-3 3z" fill="#26385e"/>
  <path d="M753.6 46.4l3.2-3v18.6l-3.2 4.2z" fill="#2e58b0" stroke="#1f3562" stroke-width="0.6"/>
  <rect x="733.8" y="46.4" width="19.8" height="20" fill="url(#gStress)" stroke="#1f3562" stroke-width="0.8"/>
  <path d="M734.6 46.8l3.6-3.2h17.8l-2.6 2.6z" fill="#f2a030"/>
  <circle cx="750.2" cy="65" r="3.2" fill="#b4cce8" stroke="#26385e" stroke-width="0.9"/>
  <path d="M753.4 65h3.4" stroke="#26385e" stroke-width="1.2"/><path d="M756.4 62.8l3 2.2-3 2.2z" fill="#26385e"/>

  <!-- Convert to sheet metal -->
  <path d="M795.4 56.2c2.6-5.6 5.6-11 9-11.6 3.8-.6 6.8 5.4 10 6.2 1.6.4 3.4-.2 4.8-.8-1.2 3-3.4 7-6.6 7.4-3.6.4-6.2-4.6-9-4.6-1.6 0-2.8 1.6-4 4.4l-.4 10.6c-1.2-1.4-2.8-2.8-4.4-3.6z" fill="url(#gBlue)" stroke="#26385e" stroke-width="0.9" stroke-linejoin="round"/>
  <path d="M795.4 56.2c1.6.6 2.8 1.4 3.8 1.6l-.4 10.6c-1.2-1.4-2.8-2.8-4.4-3.6z" fill="#e4eef8" stroke="#26385e" stroke-width="0.7"/>
  <path d="M804.4 44.6c3.8-.6 6.8 5.4 10 6.2-3 .8-6.4-4.4-10-4.2z" fill="#d6e6f6"/>
  <circle cx="808.2" cy="64.8" r="3.1" fill="#c4aee8" stroke="#4a2a8a" stroke-width="0.9"/>
  <path d="M811.3 64.8h3.6" stroke="#2a1a5a" stroke-width="1.3"/><path d="M814.4 62.4l3.2 2.4-3.2 2.4z" fill="#2a1a5a"/>
</svg>

<svg class="a" style="left:0;top:119px" width="116" height="451" viewBox="0 119 116 451" font-family="Liberation Sans" font-size="10">
<rect x="0" y="119" width="116" height="451" fill="#ffffff"/>
<rect x="0" y="119" width="1.5" height="451" fill="#454545"/>
<rect x="39" y="119" width="77" height="19.6" fill="#5b5b5b"/>
<rect x="113" y="119" width="3" height="451" fill="#5b5b5b"/>
<path d="M11.4 124l4.4 2.4v5l-4.4 2.4-4.4-2.4v-5z" fill="#555"/>
<path d="M7.2 126.6l4.2 2.3 4.2-2.3M11.4 128.9v5" stroke="#fff" stroke-width="0.8" fill="none"/>
<path d="M25.2 125.2l6.8 7M32 125.2l-6.8 7" stroke="#555" stroke-width="0.9"/>
<path d="M43.8 128.7h7M47.3 125.2v7" stroke="#e8e8e8" stroke-width="1.6"/>
<circle cx="82" cy="127.6" r="3.9" fill="none" stroke="#d0d0d0" stroke-width="1.1"/>
<path d="M84.8 130.4l3.2 3.2" stroke="#d0d0d0" stroke-width="1.3"/>
<path d="M97 125.4h10.2M97 128.6h10.2M97 131.8h10.2" stroke="#d8d8d8" stroke-width="1.1"/>
<path d="M8.6 157V440.7" stroke="#a8a8a8" stroke-width="1" stroke-dasharray="1 1"/>
<path d="M22.6 205.9V320.3" stroke="#a8a8a8" stroke-width="1" stroke-dasharray="1 1"/>
<g transform="translate(3.3,141.3)"><path d="M0.5 4.2l3.6-3.6h9.4v9.6l-3.6 3.4H0.5z" fill="#f0cc20" stroke="#7a5010" stroke-width="0.9"/><path d="M1 4.2l3.4-3.2h8.6l-3.2 3.2z" fill="#fbeb8a"/><path d="M10.2 4.4l3-3v9l-3 3z" fill="#d6ac10"/><path d="M0.5 4.2h9.8v9.6M10.3 4.2l3.2-3.6" stroke="#7a5010" stroke-width="0.8" fill="none"/></g>
<text x="19.2" y="152.6" fill="#262633" stroke="#262633" stroke-width="0.2" letter-spacing="-0.3" textLength="22.4" lengthAdjust="spacingAndGlyphs">Part8</text>
<path d="M13 165.5h3" stroke="#a8a8a8" stroke-width="1" stroke-dasharray="1 1"/>
<path d="M6.6 162.5l3.6 3.2-3.6 3.2" stroke="#8a8a8a" stroke-width="1.3" fill="none"/>
<g transform="translate(17.2,158.5)"><path d="M0.5 2.5h4.2l1 1.2h6.8v8.5H0.5z" fill="#f2d89a" stroke="#5a4a2a" stroke-width="0.8"/><circle cx="8.4" cy="11" r="2.2" fill="#fff" stroke="#333" stroke-width="0.8"/><circle cx="11" cy="9.4" r="2.2" fill="#fff" stroke="#333" stroke-width="0.8"/></g>
<text x="32.8" y="169.8" fill="#262633" stroke="#262633" stroke-width="0.2" letter-spacing="-0.3" textLength="60.4" lengthAdjust="spacingAndGlyphs">Solid Bodies(1)</text>
<path d="M13 182.7h3" stroke="#a8a8a8" stroke-width="1" stroke-dasharray="1 1"/>
<path d="M6.6 179.7l3.6 3.2-3.6 3.2" stroke="#8a8a8a" stroke-width="1.3" fill="none"/>
<g transform="translate(17.2,175.7)"><path d="M1 2.5v9.6h3" stroke="#111" stroke-width="1.1" fill="none"/><rect x="0" y="0.6" width="3" height="2" fill="#3a6ab0"/><rect x="5" y="4.6" width="3" height="2.2" fill="#3a6ab0"/><rect x="4" y="10.6" width="3" height="2.2" fill="#3a6ab0"/><path d="M8.4 8h4.8" stroke="#26385e" stroke-width="1.4"/><path d="M5 5.8v6" stroke="#111" stroke-width="0.9"/></g>
<text x="32.8" y="187.0" fill="#262633" stroke="#262633" stroke-width="0.2" letter-spacing="-0.3" textLength="52.4" lengthAdjust="spacingAndGlyphs">View: Master</text>
<path d="M13 199.9h3" stroke="#a8a8a8" stroke-width="1" stroke-dasharray="1 1"/>
<path d="M5 198.3l3.6 3.4 3.6-3.4" stroke="#3a3a3a" stroke-width="1.3" fill="none"/>
<g transform="translate(17.2,192.9)"><path d="M0.5 2h4.2l1 1.2h6.4v3H0.5z" fill="#d8b870" stroke="#6a5a3a" stroke-width="0.7"/><path d="M0.5 12.2l2.4-6.4h11l-2.6 6.4z" fill="#f2d89a" stroke="#6a5a3a" stroke-width="0.7"/></g>
<text x="32.8" y="204.2" fill="#262633" stroke="#262633" stroke-width="0.2" letter-spacing="-0.3" textLength="24" lengthAdjust="spacingAndGlyphs">Origin</text>
<path d="M23.6 217.1h6" stroke="#a8a8a8" stroke-width="1" stroke-dasharray="1 1"/>
<g transform="translate(30.8,210.1)"><rect x="4.2" y="0.8" width="9" height="8.8" fill="#e8e8e8" stroke="#555" stroke-width="0.9"/><rect x="0.5" y="3.6" width="9.5" height="8.8" fill="#d8d8d8" stroke="#555" stroke-width="0.9"/><rect x="2.2" y="5.3" width="6" height="5.4" fill="#c4c4c4"/></g>
<text x="46.6" y="221.4" fill="#262633" stroke="#262633" stroke-width="0.2" letter-spacing="-0.3" textLength="35.5" lengthAdjust="spacingAndGlyphs">YZ Plane</text>
<path d="M23.6 234.3h6" stroke="#a8a8a8" stroke-width="1" stroke-dasharray="1 1"/>
<g transform="translate(30.8,227.3)"><rect x="4.2" y="0.8" width="9" height="8.8" fill="#e8e8e8" stroke="#555" stroke-width="0.9"/><rect x="0.5" y="3.6" width="9.5" height="8.8" fill="#d8d8d8" stroke="#555" stroke-width="0.9"/><rect x="2.2" y="5.3" width="6" height="5.4" fill="#c4c4c4"/></g>
<text x="46.6" y="238.6" fill="#262633" stroke="#262633" stroke-width="0.2" letter-spacing="-0.3" textLength="35.5" lengthAdjust="spacingAndGlyphs">XZ Plane</text>
<path d="M23.6 251.5h6" stroke="#a8a8a8" stroke-width="1" stroke-dasharray="1 1"/>
<g transform="translate(30.8,244.5)"><rect x="4.2" y="0.8" width="9" height="8.8" fill="#e8e8e8" stroke="#555" stroke-width="0.9"/><rect x="0.5" y="3.6" width="9.5" height="8.8" fill="#d8d8d8" stroke="#555" stroke-width="0.9"/><rect x="2.2" y="5.3" width="6" height="5.4" fill="#c4c4c4"/></g>
<text x="46.6" y="255.8" fill="#262633" stroke="#262633" stroke-width="0.2" letter-spacing="-0.3" textLength="35.5" lengthAdjust="spacingAndGlyphs">XY Plane</text>
<path d="M23.6 268.7h6" stroke="#a8a8a8" stroke-width="1" stroke-dasharray="1 1"/>
<g transform="translate(30.8,261.7)"><rect x="3.5" y="1" width="9.6" height="9.4" fill="#f2f2f2" stroke="#666" stroke-width="0.9"/><path d="M0 14l11.6-11.6" stroke="#888" stroke-width="0.9"/></g>
<text x="46.6" y="273.0" fill="#262633" stroke="#262633" stroke-width="0.2" letter-spacing="-0.3" textLength="25.2" lengthAdjust="spacingAndGlyphs">X Axis</text>
<path d="M23.6 285.9h6" stroke="#a8a8a8" stroke-width="1" stroke-dasharray="1 1"/>
<g transform="translate(30.8,278.9)"><rect x="3.5" y="1" width="9.6" height="9.4" fill="#f2f2f2" stroke="#666" stroke-width="0.9"/><path d="M0 14l11.6-11.6" stroke="#888" stroke-width="0.9"/></g>
<text x="46.6" y="290.2" fill="#262633" stroke="#262633" stroke-width="0.2" letter-spacing="-0.3" textLength="25.2" lengthAdjust="spacingAndGlyphs">Y Axis</text>
<path d="M23.6 303.1h6" stroke="#a8a8a8" stroke-width="1" stroke-dasharray="1 1"/>
<g transform="translate(30.8,296.1)"><rect x="3.5" y="1" width="9.6" height="9.4" fill="#f2f2f2" stroke="#666" stroke-width="0.9"/><path d="M0 14l11.6-11.6" stroke="#888" stroke-width="0.9"/></g>
<text x="46.6" y="307.4" fill="#262633" stroke="#262633" stroke-width="0.2" letter-spacing="-0.3" textLength="25.2" lengthAdjust="spacingAndGlyphs">Z Axis</text>
<path d="M23.6 320.3h6" stroke="#a8a8a8" stroke-width="1" stroke-dasharray="1 1"/>
<g transform="translate(30.8,313.3)"><path d="M6.4 1.8l5 5-5 5-5-5z" fill="none" stroke="#aaa" stroke-width="0.9"/><circle cx="6.4" cy="6.8" r="1.6" fill="none" stroke="#aaa" stroke-width="0.7"/><path d="M1 6.8h10.8M6.4 1.4v10.8" stroke="#bbb" stroke-width="0.5"/></g>
<text x="46.6" y="324.6" fill="#262633" stroke="#262633" stroke-width="0.2" letter-spacing="-0.3" textLength="51.4" lengthAdjust="spacingAndGlyphs">Center Point</text>
<path d="M13 337.5h3" stroke="#a8a8a8" stroke-width="1" stroke-dasharray="1 1"/>
<path d="M6.6 334.5l3.6 3.2-3.6 3.2" stroke="#8a8a8a" stroke-width="1.3" fill="none"/>
<g transform="translate(17.2,330.5)"><path d="M0.5 3.6l2.4-2.4h6.2v10.6l-2.4 2.4H0.5z" fill="#f0cc20" stroke="#1a1a1a" stroke-width="0.9"/><path d="M1 3.6l2-2h5.8l-2 2z" fill="#7aa6dc"/><path d="M6.6 3.8l2.2-2.2v10l-2.2 2.2z" fill="#a89050"/><path d="M11.8 13.6V2.6" stroke="#b01818" stroke-width="1.1"/><path d="M10.4 3.6l1.4-3 1.4 3z" fill="#b01818"/></g>
<text x="32.8" y="341.8" fill="#262633" stroke="#262633" stroke-width="0.2" letter-spacing="-0.3" textLength="44.2" lengthAdjust="spacingAndGlyphs">Extrusion1</text>
<path d="M13 354.7h3" stroke="#a8a8a8" stroke-width="1" stroke-dasharray="1 1"/>
<path d="M6.6 351.7l3.6 3.2-3.6 3.2" stroke="#8a8a8a" stroke-width="1.3" fill="none"/>
<g transform="translate(17.2,347.7)"><path d="M0.5 3.6l2.4-2.4h6.2v10.6l-2.4 2.4H0.5z" fill="#f0cc20" stroke="#1a1a1a" stroke-width="0.9"/><path d="M1 3.6l2-2h5.8l-2 2z" fill="#7aa6dc"/><path d="M6.6 3.8l2.2-2.2v10l-2.2 2.2z" fill="#a89050"/><path d="M11.8 13.6V2.6" stroke="#b01818" stroke-width="1.1"/><path d="M10.4 3.6l1.4-3 1.4 3z" fill="#b01818"/></g>
<text x="32.8" y="359.0" fill="#262633" stroke="#262633" stroke-width="0.2" letter-spacing="-0.3" textLength="44.2" lengthAdjust="spacingAndGlyphs">Extrusion2</text>
<path d="M13 371.9h3" stroke="#a8a8a8" stroke-width="1" stroke-dasharray="1 1"/>
<path d="M6.6 368.9l3.6 3.2-3.6 3.2" stroke="#8a8a8a" stroke-width="1.3" fill="none"/>
<g transform="translate(17.2,364.9)"><path d="M0.5 3.6l2.4-2.4h6.2v10.6l-2.4 2.4H0.5z" fill="#f0cc20" stroke="#1a1a1a" stroke-width="0.9"/><path d="M1 3.6l2-2h5.8l-2 2z" fill="#7aa6dc"/><path d="M6.6 3.8l2.2-2.2v10l-2.2 2.2z" fill="#a89050"/><path d="M11.8 13.6V2.6" stroke="#b01818" stroke-width="1.1"/><path d="M10.4 3.6l1.4-3 1.4 3z" fill="#b01818"/></g>
<text x="32.8" y="376.2" fill="#262633" stroke="#262633" stroke-width="0.2" letter-spacing="-0.3" textLength="44.2" lengthAdjust="spacingAndGlyphs">Extrusion3</text>
<path d="M13 389.1h3" stroke="#a8a8a8" stroke-width="1" stroke-dasharray="1 1"/>
<g transform="translate(17.2,382.1)"><path d="M0.5 6.4l4.4-5.2h5l3.4 3.8v8.8H3.5l-3-3z" fill="#f0cc20" stroke="#2a2a2a" stroke-width="0.8"/><path d="M0.8 6.2l4.2-4.8h4.8l-4.2 5.4-1.6 1.4z" fill="#7aa6dc" stroke="#2a2a2a" stroke-width="0.6"/></g>
<text x="32.8" y="393.4" fill="#262633" stroke="#262633" stroke-width="0.2" letter-spacing="-0.3" textLength="40.5" lengthAdjust="spacingAndGlyphs">Chamfer1</text>
<path d="M13 406.3h3" stroke="#a8a8a8" stroke-width="1" stroke-dasharray="1 1"/>
<path d="M6.6 403.3l3.6 3.2-3.6 3.2" stroke="#8a8a8a" stroke-width="1.3" fill="none"/>
<g transform="translate(17.2,399.3)"><path d="M1.5 1.5h9l-8 3 8 1M1.5 5.5h9l-8 3 8 1M1.5 9.5h9l-8 3 8 1" stroke="#26385e" stroke-width="1.3" fill="none"/><path d="M2 3.2h7M2 7.2h7M2 11.2h7" stroke="#7aa6dc" stroke-width="1.2"/></g>
<text x="32.8" y="410.6" fill="#262633" stroke="#262633" stroke-width="0.2" letter-spacing="-0.3" textLength="20.2" lengthAdjust="spacingAndGlyphs">Coil1</text>
<path d="M13 423.5h3" stroke="#a8a8a8" stroke-width="1" stroke-dasharray="1 1"/>
<path d="M6.6 420.5l3.6 3.2-3.6 3.2" stroke="#8a8a8a" stroke-width="1.3" fill="none"/>
<g transform="translate(17.2,416.5)"><path d="M0.5 3.6l2.4-2.4h6.2v10.6l-2.4 2.4H0.5z" fill="#f0cc20" stroke="#1a1a1a" stroke-width="0.9"/><path d="M1 3.6l2-2h5.8l-2 2z" fill="#7aa6dc"/><path d="M6.6 3.8l2.2-2.2v10l-2.2 2.2z" fill="#a89050"/><path d="M11.8 13.6V2.6" stroke="#b01818" stroke-width="1.1"/><path d="M10.4 3.6l1.4-3 1.4 3z" fill="#b01818"/></g>
<text x="32.8" y="427.8" fill="#262633" stroke="#262633" stroke-width="0.2" letter-spacing="-0.3" textLength="44.2" lengthAdjust="spacingAndGlyphs">Extrusion4</text>
<path d="M13 440.7h3" stroke="#a8a8a8" stroke-width="1" stroke-dasharray="1 1"/>
<path d="M8.6 440.7h7" stroke="#a8a8a8" stroke-width="1" stroke-dasharray="1 1"/>
<g transform="translate(17.2,433.7)"><path d="M3.8 0.6h5.2l3.6 3.6v5.2l-3.6 3.6H3.8L0.2 9.4V4.2z" fill="#e85a5a" stroke="#8a1a1a" stroke-width="0.7"/><circle cx="6.4" cy="6.8" r="4.6" fill="#f08080"/><path d="M4 4.4l4.8 4.8M8.8 4.4l-4.8 4.8" stroke="#fff" stroke-width="1.5"/></g>
<text x="32.8" y="445.0" fill="#262633" stroke="#262633" stroke-width="0.2" letter-spacing="-0.3" textLength="46.8" lengthAdjust="spacingAndGlyphs">End of Part</text>
</svg>
<svg class="a" style="left:116px;top:119px" width="724" height="451" viewBox="116 119 724 451">
<defs>
<linearGradient id="shk" gradientUnits="userSpaceOnUse" x1="230" y1="-40" x2="305" y2="46"><stop offset="0" stop-color="#bebebe"/><stop offset="0.6" stop-color="#b8b8b8"/><stop offset="1" stop-color="#a4a4a4"/></linearGradient>
<clipPath id="thc"><polygon points="215.50,-46.50 208.09,-38.20 201.00,-46.50 193.91,-38.20 186.82,-46.50 179.73,-38.20 172.64,-46.50 165.55,-38.20 158.46,-46.50 151.37,-38.20 144.28,-46.50 137.19,-38.20 130.10,-46.50 123.01,-38.20 115.92,-46.50 108.83,-38.20 101.74,-46.50 94.65,-38.20 87.56,-46.50 80.47,-38.20 73.38,-46.50 66.29,-38.20 59.20,-46.50 52.11,-38.20 45.02,-46.50 37.93,-38.20 30.84,-46.50 23.75,-38.20 16.66,-46.50 9.57,-38.20 2.48,-46.50 -4.61,-38.20 -11.70,-46.50 -18.79,-38.20 -25.88,-46.50 -32.97,-38.20 -40.06,-46.50 -47.15,-38.20 -54.24,-46.50 -61.33,-38.20 -68.42,-46.50 -75.51,-38.20 -82.60,-46.50 -89.69,-38.20 -96.78,-46.50 -103.87,-38.20 -110.96,-46.50 -118.05,-38.20 -125.14,-46.50 -132.23,-38.20 -139.32,-46.50 -147.20,-40.30 -158.00,-27.40 -155.20,30.50 -143.20,44.90 -136.90,39.20 -130.62,46.50 -123.53,38.20 -116.44,46.50 -109.35,38.20 -102.26,46.50 -95.17,38.20 -88.08,46.50 -80.99,38.20 -73.90,46.50 -66.81,38.20 -59.72,46.50 -52.63,38.20 -45.54,46.50 -38.45,38.20 -31.36,46.50 -24.27,38.20 -17.18,46.50 -10.09,38.20 -3.00,46.50 4.09,38.20 11.18,46.50 18.27,38.20 25.36,46.50 32.45,38.20 39.54,46.50 46.63,38.20 53.72,46.50 60.81,38.20 67.90,46.50 74.99,38.20 82.08,46.50 89.17,38.20 96.26,46.50 103.35,38.20 110.44,46.50 117.53,38.20 124.62,46.50 131.71,38.20 138.80,46.50 145.89,38.20 152.98,46.50 160.07,38.20 167.16,46.50 174.25,38.20 181.34,46.50 188.43,38.20 195.52,46.50 202.61,38.20 209.70,46.50 216.79,38.20 222.40,46.50"/></clipPath>
<linearGradient id="thg" gradientUnits="userSpaceOnUse" spreadMethod="repeat" x1="198.40" y1="-46.5" x2="184.34" y2="-45.19"><stop offset="0" stop-color="#bdbdbd"/><stop offset="0.5" stop-color="#b6b6b6"/><stop offset="1" stop-color="#acacac"/></linearGradient>
</defs>
<rect x="116" y="119" width="724" height="451" fill="#000"/>
<g transform="matrix(0.641,-0.768,0.768,0.641,496.5,414.4)">
<path d="M316 95L386 95 L397.5 -63.5 L402 -140 L316 -140z" fill="#c2c2c2"/>
<path d="M316 32.5L316 94.8L386 94.8L391.6 32.5z" fill="#c0c0c0"/>
<path d="M316 -63.5L397.5 -63.5L402 -140L316 -140z" fill="#b8b8b8"/>
<path d="M322.8 32.6L391.6 33" stroke="#1a1a1a" stroke-width="0.9"/>
<path d="M319 -63.5L397.5 -63.5" stroke="#1a1a1a" stroke-width="0.9"/>
<path d="M311.3 -84L308.1 -47.7L306 0L310.3 48L310.5 83.1L313.2 84.5L318.1 95.8L317.8 84Q312.8 0 317.8 -84z" fill="#cbcbcb"/>
<path d="M215.5 -46.5L309.7 -47.5Q306 0 311.7 46.9L222.4 46.5Q218 0 215.5 -46.5z" fill="url(#shk)"/>
<path d="M313.6 -84Q308.6 0 313.2 83.5L318.1 95.8L317.8 84Q312.8 0 317.8 -84z" fill="#c6c6c6"/>
<path d="M313.6 -84Q308.6 0 313.2 83" fill="none" stroke="#1a1a1a" stroke-width="0.95"/>
<path d="M317.8 -84Q312.8 0 317.8 84L318.1 95.8" fill="none" stroke="#1a1a1a" stroke-width="0.95"/>
<path d="M310.5 83.1L313.2 84.5L318.1 95.8" fill="none" stroke="#2a2a2a" stroke-width="0.6"/>
<polygon points="215.50,-46.50 208.09,-38.20 201.00,-46.50 193.91,-38.20 186.82,-46.50 179.73,-38.20 172.64,-46.50 165.55,-38.20 158.46,-46.50 151.37,-38.20 144.28,-46.50 137.19,-38.20 130.10,-46.50 123.01,-38.20 115.92,-46.50 108.83,-38.20 101.74,-46.50 94.65,-38.20 87.56,-46.50 80.47,-38.20 73.38,-46.50 66.29,-38.20 59.20,-46.50 52.11,-38.20 45.02,-46.50 37.93,-38.20 30.84,-46.50 23.75,-38.20 16.66,-46.50 9.57,-38.20 2.48,-46.50 -4.61,-38.20 -11.70,-46.50 -18.79,-38.20 -25.88,-46.50 -32.97,-38.20 -40.06,-46.50 -47.15,-38.20 -54.24,-46.50 -61.33,-38.20 -68.42,-46.50 -75.51,-38.20 -82.60,-46.50 -89.69,-38.20 -96.78,-46.50 -103.87,-38.20 -110.96,-46.50 -118.05,-38.20 -125.14,-46.50 -132.23,-38.20 -139.32,-46.50 -147.20,-40.30 -158.00,-27.40 -155.20,30.50 -143.20,44.90 -136.90,39.20 -130.62,46.50 -123.53,38.20 -116.44,46.50 -109.35,38.20 -102.26,46.50 -95.17,38.20 -88.08,46.50 -80.99,38.20 -73.90,46.50 -66.81,38.20 -59.72,46.50 -52.63,38.20 -45.54,46.50 -38.45,38.20 -31.36,46.50 -24.27,38.20 -17.18,46.50 -10.09,38.20 -3.00,46.50 4.09,38.20 11.18,46.50 18.27,38.20 25.36,46.50 32.45,38.20 39.54,46.50 46.63,38.20 53.72,46.50 60.81,38.20 67.90,46.50 74.99,38.20 82.08,46.50 89.17,38.20 96.26,46.50 103.35,38.20 110.44,46.50 117.53,38.20 124.62,46.50 131.71,38.20 138.80,46.50 145.89,38.20 152.98,46.50 160.07,38.20 167.16,46.50 174.25,38.20 181.34,46.50 188.43,38.20 195.52,46.50 202.61,38.20 209.70,46.50 216.79,38.20 222.40,46.50" fill="#b3b3b3"/>
<g clip-path="url(#thc)">
<path d="M215.5 -46.5Q221.5 0 222.4 46.5" stroke="#1a1a1a" stroke-width="0.9" fill="none"/>
<path d="M201.00 -47.00C204.81 -18.80 208.29 18.80 209.70 47.00 L209.70 47.00C207.71 18.80 193.79 -18.80 201.00 -47.00z" fill="#c8c8c8"/>
<path d="M201.00 -47.00C204.81 -18.80 208.29 18.80 209.70 47.00" fill="none" stroke="#1c1c1c" stroke-width="0.95"/>
<path d="M201.00 -47.00C201.41 -18.80 204.89 18.80 209.70 47.00" fill="none" stroke="#1c1c1c" stroke-width="0.95"/>
<path d="M186.82 -47.00C196.12 -18.80 194.92 18.80 195.52 47.00 L195.52 47.00C192.72 18.80 174.12 -18.80 186.82 -47.00z" fill="#c8c8c8"/>
<path d="M186.82 -47.00C196.12 -18.80 194.92 18.80 195.52 47.00" fill="none" stroke="#1c1c1c" stroke-width="0.95"/>
<path d="M186.82 -47.00C192.72 -18.80 191.52 18.80 195.52 47.00" fill="none" stroke="#1c1c1c" stroke-width="0.95"/>
<path d="M193.91 -38.50C201.81 -15.40 202.10 15.40 202.61 38.50" fill="none" stroke="#1c1c1c" stroke-width="0.95"/>
<path d="M172.64 -47.00C181.94 -18.80 180.74 18.80 181.34 47.00 L181.34 47.00C178.54 18.80 159.94 -18.80 172.64 -47.00z" fill="#c8c8c8"/>
<path d="M172.64 -47.00C181.94 -18.80 180.74 18.80 181.34 47.00" fill="none" stroke="#1c1c1c" stroke-width="0.95"/>
<path d="M172.64 -47.00C178.54 -18.80 177.34 18.80 181.34 47.00" fill="none" stroke="#1c1c1c" stroke-width="0.95"/>
<path d="M179.73 -38.50C187.63 -15.40 187.92 15.40 188.43 38.50" fill="none" stroke="#1c1c1c" stroke-width="0.95"/>
<path d="M158.46 -47.00C167.76 -18.80 166.56 18.80 167.16 47.00 L167.16 47.00C164.36 18.80 145.76 -18.80 158.46 -47.00z" fill="#c8c8c8"/>
<path d="M158.46 -47.00C167.76 -18.80 166.56 18.80 167.16 47.00" fill="none" stroke="#1c1c1c" stroke-width="0.95"/>
<path d="M158.46 -47.00C164.36 -18.80 163.16 18.80 167.16 47.00" fill="none" stroke="#1c1c1c" stroke-width="0.95"/>
<path d="M165.55 -38.50C173.46 -15.40 173.74 15.40 174.25 38.50" fill="none" stroke="#1c1c1c" stroke-width="0.95"/>
<path d="M144.28 -47.00C153.58 -18.80 152.38 18.80 152.98 47.00 L152.98 47.00C150.18 18.80 131.58 -18.80 144.28 -47.00z" fill="#c8c8c8"/>
<path d="M144.28 -47.00C153.58 -18.80 152.38 18.80 152.98 47.00" fill="none" stroke="#1c1c1c" stroke-width="0.95"/>
<path d="M144.28 -47.00C150.18 -18.80 148.98 18.80 152.98 47.00" fill="none" stroke="#1c1c1c" stroke-width="0.95"/>
<path d="M151.37 -38.50C159.28 -15.40 159.56 15.40 160.07 38.50" fill="none" stroke="#1c1c1c" stroke-width="0.95"/>
<path d="M130.10 -47.00C139.40 -18.80 138.20 18.80 138.80 47.00 L138.80 47.00C136.00 18.80 117.40 -18.80 130.10 -47.00z" fill="#c8c8c8"/>
<path d="M130.10 -47.00C139.40 -18.80 138.20 18.80 138.80 47.00" fill="none" stroke="#1c1c1c" stroke-width="0.95"/>
<path d="M130.10 -47.00C136.00 -18.80 134.80 18.80 138.80 47.00" fill="none" stroke="#1c1c1c" stroke-width="0.95"/>
<path d="M137.19 -38.50C145.09 -15.40 145.38 15.40 145.89 38.50" fill="none" stroke="#1c1c1c" stroke-width="0.95"/>
<path d="M115.92 -47.00C125.22 -18.80 124.02 18.80 124.62 47.00 L124.62 47.00C121.82 18.80 103.22 -18.80 115.92 -47.00z" fill="#c8c8c8"/>
<path d="M115.92 -47.00C125.22 -18.80 124.02 18.80 124.62 47.00" fill="none" stroke="#1c1c1c" stroke-width="0.95"/>
<path d="M115.92 -47.00C121.82 -18.80 120.62 18.80 124.62 47.00" fill="none" stroke="#1c1c1c" stroke-width="0.95"/>
<path d="M123.01 -38.50C130.91 -15.40 131.20 15.40 131.71 38.50" fill="none" stroke="#1c1c1c" stroke-width="0.95"/>
<path d="M101.74 -47.00C111.04 -18.80 109.84 18.80 110.44 47.00 L110.44 47.00C107.64 18.80 89.04 -18.80 101.74 -47.00z" fill="#c8c8c8"/>
<path d="M101.74 -47.00C111.04 -18.80 109.84 18.80 110.44 47.00" fill="none" stroke="#1c1c1c" stroke-width="0.95"/>
<path d="M101.74 -47.00C107.64 -18.80 106.44 18.80 110.44 47.00" fill="none" stroke="#1c1c1c" stroke-width="0.95"/>
<path d="M108.83 -38.50C116.74 -15.40 117.02 15.40 117.53 38.50" fill="none" stroke="#1c1c1c" stroke-width="0.95"/>
<path d="M87.56 -47.00C96.86 -18.80 95.66 18.80 96.26 47.00 L96.26 47.00C93.46 18.80 74.86 -18.80 87.56 -47.00z" fill="#c8c8c8"/>
<path d="M87.56 -47.00C96.86 -18.80 95.66 18.80 96.26 47.00" fill="none" stroke="#1c1c1c" stroke-width="0.95"/>
<path d="M87.56 -47.00C93.46 -18.80 92.26 18.80 96.26 47.00" fill="none" stroke="#1c1c1c" stroke-width="0.95"/>
<path d="M94.65 -38.50C102.56 -15.40 102.84 15.40 103.35 38.50" fill="none" stroke="#1c1c1c" stroke-width="0.95"/>
<path d="M73.38 -47.00C82.68 -18.80 81.48 18.80 82.08 47.00 L82.08 47.00C79.28 18.80 60.68 -18.80 73.38 -47.00z" fill="#c8c8c8"/>
<path d="M73.38 -47.00C82.68 -18.80 81.48 18.80 82.08 47.00" fill="none" stroke="#1c1c1c" stroke-width="0.95"/>
<path d="M73.38 -47.00C79.28 -18.80 78.08 18.80 82.08 47.00" fill="none" stroke="#1c1c1c" stroke-width="0.95"/>
<path d="M80.47 -38.50C88.38 -15.40 88.66 15.40 89.17 38.50" fill="none" stroke="#1c1c1c" stroke-width="0.95"/>
<path d="M59.20 -47.00C68.50 -18.80 67.30 18.80 67.90 47.00 L67.90 47.00C65.10 18.80 46.50 -18.80 59.20 -47.00z" fill="#c8c8c8"/>
<path d="M59.20 -47.00C68.50 -18.80 67.30 18.80 67.90 47.00" fill="none" stroke="#1c1c1c" stroke-width="0.95"/>
<path d="M59.20 -47.00C65.10 -18.80 63.90 18.80 67.90 47.00" fill="none" stroke="#1c1c1c" stroke-width="0.95"/>
<path d="M66.29 -38.50C74.19 -15.40 74.48 15.40 74.99 38.50" fill="none" stroke="#1c1c1c" stroke-width="0.95"/>
<path d="M45.02 -47.00C54.32 -18.80 53.12 18.80 53.72 47.00 L53.72 47.00C50.92 18.80 32.32 -18.80 45.02 -47.00z" fill="#c8c8c8"/>
<path d="M45.02 -47.00C54.32 -18.80 53.12 18.80 53.72 47.00" fill="none" stroke="#1c1c1c" stroke-width="0.95"/>
<path d="M45.02 -47.00C50.92 -18.80 49.72 18.80 53.72 47.00" fill="none" stroke="#1c1c1c" stroke-width="0.95"/>
<path d="M52.11 -38.50C60.02 -15.40 60.30 15.40 60.81 38.50" fill="none" stroke="#1c1c1c" stroke-width="0.95"/>
<path d="M30.84 -47.00C40.14 -18.80 38.94 18.80 39.54 47.00 L39.54 47.00C36.74 18.80 18.14 -18.80 30.84 -47.00z" fill="#c8c8c8"/>
<path d="M30.84 -47.00C40.14 -18.80 38.94 18.80 39.54 47.00" fill="none" stroke="#1c1c1c" stroke-width="0.95"/>
<path d="M30.84 -47.00C36.74 -18.80 35.54 18.80 39.54 47.00" fill="none" stroke="#1c1c1c" stroke-width="0.95"/>
<path d="M37.93 -38.50C45.84 -15.40 46.12 15.40 46.63 38.50" fill="none" stroke="#1c1c1c" stroke-width="0.95"/>
<path d="M16.66 -47.00C25.96 -18.80 24.76 18.80 25.36 47.00 L25.36 47.00C22.56 18.80 3.96 -18.80 16.66 -47.00z" fill="#c8c8c8"/>
<path d="M16.66 -47.00C25.96 -18.80 24.76 18.80 25.36 47.00" fill="none" stroke="#1c1c1c" stroke-width="0.95"/>
<path d="M16.66 -47.00C22.56 -18.80 21.36 18.80 25.36 47.00" fill="none" stroke="#1c1c1c" stroke-width="0.95"/>
<path d="M23.75 -38.50C31.65 -15.40 31.94 15.40 32.45 38.50" fill="none" stroke="#1c1c1c" stroke-width="0.95"/>
<path d="M2.48 -47.00C11.78 -18.80 10.58 18.80 11.18 47.00 L11.18 47.00C8.38 18.80 -10.22 -18.80 2.48 -47.00z" fill="#c8c8c8"/>
<path d="M2.48 -47.00C11.78 -18.80 10.58 18.80 11.18 47.00" fill="none" stroke="#1c1c1c" stroke-width="0.95"/>
<path d="M2.48 -47.00C8.38 -18.80 7.18 18.80 11.18 47.00" fill="none" stroke="#1c1c1c" stroke-width="0.95"/>
<path d="M9.57 -38.50C17.48 -15.40 17.76 15.40 18.27 38.50" fill="none" stroke="#1c1c1c" stroke-width="0.95"/>
<path d="M-11.70 -47.00C-2.40 -18.80 -3.60 18.80 -3.00 47.00 L-3.00 47.00C-5.80 18.80 -24.40 -18.80 -11.70 -47.00z" fill="#c8c8c8"/>
<path d="M-11.70 -47.00C-2.40 -18.80 -3.60 18.80 -3.00 47.00" fill="none" stroke="#1c1c1c" stroke-width="0.95"/>
<path d="M-11.70 -47.00C-5.80 -18.80 -7.00 18.80 -3.00 47.00" fill="none" stroke="#1c1c1c" stroke-width="0.95"/>
<path d="M-4.61 -38.50C3.30 -15.40 3.58 15.40 4.09 38.50" fill="none" stroke="#1c1c1c" stroke-width="0.95"/>
<path d="M-25.88 -47.00C-16.58 -18.80 -17.78 18.80 -17.18 47.00 L-17.18 47.00C-19.98 18.80 -38.58 -18.80 -25.88 -47.00z" fill="#c8c8c8"/>
<path d="M-25.88 -47.00C-16.58 -18.80 -17.78 18.80 -17.18 47.00" fill="none" stroke="#1c1c1c" stroke-width="0.95"/>
<path d="M-25.88 -47.00C-19.98 -18.80 -21.18 18.80 -17.18 47.00" fill="none" stroke="#1c1c1c" stroke-width="0.95"/>
<path d="M-18.79 -38.50C-10.88 -15.40 -10.60 15.40 -10.09 38.50" fill="none" stroke="#1c1c1c" stroke-width="0.95"/>
<path d="M-40.06 -47.00C-30.76 -18.80 -31.96 18.80 -31.36 47.00 L-31.36 47.00C-34.16 18.80 -52.76 -18.80 -40.06 -47.00z" fill="#c8c8c8"/>
<path d="M-40.06 -47.00C-30.76 -18.80 -31.96 18.80 -31.36 47.00" fill="none" stroke="#1c1c1c" stroke-width="0.95"/>
<path d="M-40.06 -47.00C-34.16 -18.80 -35.36 18.80 -31.36 47.00" fill="none" stroke="#1c1c1c" stroke-width="0.95"/>
<path d="M-32.97 -38.50C-25.06 -15.40 -24.78 15.40 -24.27 38.50" fill="none" stroke="#1c1c1c" stroke-width="0.95"/>
<path d="M-54.24 -47.00C-44.94 -18.80 -46.14 18.80 -45.54 47.00 L-45.54 47.00C-48.34 18.80 -66.94 -18.80 -54.24 -47.00z" fill="#c8c8c8"/>
<path d="M-54.24 -47.00C-44.94 -18.80 -46.14 18.80 -45.54 47.00" fill="none" stroke="#1c1c1c" stroke-width="0.95"/>
<path d="M-54.24 -47.00C-48.34 -18.80 -49.54 18.80 -45.54 47.00" fill="none" stroke="#1c1c1c" stroke-width="0.95"/>
<path d="M-47.15 -38.50C-39.25 -15.40 -38.96 15.40 -38.45 38.50" fill="none" stroke="#1c1c1c" stroke-width="0.95"/>
<path d="M-68.42 -47.00C-59.12 -18.80 -60.32 18.80 -59.72 47.00 L-59.72 47.00C-62.52 18.80 -81.12 -18.80 -68.42 -47.00z" fill="#c8c8c8"/>
<path d="M-68.42 -47.00C-59.12 -18.80 -60.32 18.80 -59.72 47.00" fill="none" stroke="#1c1c1c" stroke-width="0.95"/>
<path d="M-68.42 -47.00C-62.52 -18.80 -63.72 18.80 -59.72 47.00" fill="none" stroke="#1c1c1c" stroke-width="0.95"/>
<path d="M-61.33 -38.50C-53.43 -15.40 -53.14 15.40 -52.63 38.50" fill="none" stroke="#1c1c1c" stroke-width="0.95"/>
<path d="M-82.60 -47.00C-73.30 -18.80 -74.50 18.80 -73.90 47.00 L-73.90 47.00C-76.70 18.80 -95.30 -18.80 -82.60 -47.00z" fill="#c8c8c8"/>
<path d="M-82.60 -47.00C-73.30 -18.80 -74.50 18.80 -73.90 47.00" fill="none" stroke="#1c1c1c" stroke-width="0.95"/>
<path d="M-82.60 -47.00C-76.70 -18.80 -77.90 18.80 -73.90 47.00" fill="none" stroke="#1c1c1c" stroke-width="0.95"/>
<path d="M-75.51 -38.50C-67.61 -15.40 -67.32 15.40 -66.81 38.50" fill="none" stroke="#1c1c1c" stroke-width="0.95"/>
<path d="M-96.78 -47.00C-87.48 -18.80 -88.68 18.80 -88.08 47.00 L-88.08 47.00C-90.88 18.80 -109.48 -18.80 -96.78 -47.00z" fill="#c8c8c8"/>
<path d="M-96.78 -47.00C-87.48 -18.80 -88.68 18.80 -88.08 47.00" fill="none" stroke="#1c1c1c" stroke-width="0.95"/>
<path d="M-96.78 -47.00C-90.88 -18.80 -92.08 18.80 -88.08 47.00" fill="none" stroke="#1c1c1c" stroke-width="0.95"/>
<path d="M-89.69 -38.50C-81.78 -15.40 -81.50 15.40 -80.99 38.50" fill="none" stroke="#1c1c1c" stroke-width="0.95"/>
<path d="M-110.96 -47.00C-101.66 -18.80 -102.86 18.80 -102.26 47.00 L-102.26 47.00C-105.06 18.80 -123.66 -18.80 -110.96 -47.00z" fill="#c8c8c8"/>
<path d="M-110.96 -47.00C-101.66 -18.80 -102.86 18.80 -102.26 47.00" fill="none" stroke="#1c1c1c" stroke-width="0.95"/>
<path d="M-110.96 -47.00C-105.06 -18.80 -106.26 18.80 -102.26 47.00" fill="none" stroke="#1c1c1c" stroke-width="0.95"/>
<path d="M-103.87 -38.50C-95.96 -15.40 -95.68 15.40 -95.17 38.50" fill="none" stroke="#1c1c1c" stroke-width="0.95"/>
<path d="M-125.14 -47.00C-115.84 -18.80 -117.04 18.80 -116.44 47.00 L-116.44 47.00C-119.24 18.80 -137.84 -18.80 -125.14 -47.00z" fill="#c8c8c8"/>
<path d="M-125.14 -47.00C-115.84 -18.80 -117.04 18.80 -116.44 47.00" fill="none" stroke="#1c1c1c" stroke-width="0.95"/>
<path d="M-125.14 -47.00C-119.24 -18.80 -120.44 18.80 -116.44 47.00" fill="none" stroke="#1c1c1c" stroke-width="0.95"/>
<path d="M-118.05 -38.50C-110.14 -15.40 -109.86 15.40 -109.35 38.50" fill="none" stroke="#1c1c1c" stroke-width="0.95"/>
<path d="M-139.32 -47.00C-130.02 -18.80 -131.22 18.80 -130.62 47.00 L-130.62 47.00C-133.42 18.80 -152.02 -18.80 -139.32 -47.00z" fill="#c8c8c8"/>
<path d="M-139.32 -47.00C-130.02 -18.80 -131.22 18.80 -130.62 47.00" fill="none" stroke="#1c1c1c" stroke-width="0.95"/>
<path d="M-139.32 -47.00C-133.42 -18.80 -134.62 18.80 -130.62 47.00" fill="none" stroke="#1c1c1c" stroke-width="0.95"/>
<path d="M-132.23 -38.50C-124.32 -15.40 -124.04 15.40 -123.53 38.50" fill="none" stroke="#1c1c1c" stroke-width="0.95"/>
</g>
</g>
<path d="M816.3 178.6L837.4 153.6L840 152.7V198.4z" fill="#5a5a5a"/>
<path d="M831 182l6-7M833.5 184l6-7M836 186l4-5" stroke="#4a4a4a" stroke-width="0.9"/>
<rect x="833" y="129" width="7" height="2.2" fill="#f0f0f0"/>
<!-- triad -->
<path d="M148.6 527.4L160.5 536.2" stroke="#3c8c3c" stroke-width="1.1"/>
<path d="M142 520.9L151.2 522.6L144.7 530.5z" fill="#14921a"/>
<path d="M162.2 535.3L171 525.7" stroke="#1c1ca0" stroke-width="1.6"/>
<path d="M168.8 521.7L176.7 517.4L175.8 527z" fill="#1212c4"/>
<path d="M158 538.6c0-2.6 2-4.2 4.6-4.2s4.6 1.8 4.6 4.4c0 2-1 3.4-2.2 4.2l.6 2.6-2-1.2-1.4 1.8-.6-2.2c-2.2-.6-3.6-2.4-3.6-5.4z" fill="#d8180c"/>
<path d="M134.3 513.2l3.2 4.2 3.2-4.2M137.5 517.4v4.4" stroke="#1ea01e" stroke-width="1.3" fill="none"/>
<path d="M178.6 509.2l4.8-0.6-4.4 8.6 4.8-0.6" stroke="#1414b4" stroke-width="1.4" fill="none" stroke-linejoin="round"/>
<!-- cursor -->
<path d="M625 390.4V402.7L627.6 400.4L630 404.4L631.8 403.6L629.6 399.6L633.9 398.7z" fill="#f4f4f4" stroke="#1a1a1a" stroke-width="0.5"/>
<!-- watermark -->
<defs><filter id="glw" x="-20%" y="-50%" width="140%" height="200%"><feGaussianBlur stdDeviation="1.2"/></filter></defs>
<defs><filter id="ring" x="-10%" y="-40%" width="120%" height="180%">
  <feMorphology in="SourceAlpha" operator="dilate" radius="2.2" result="d2"/>
  <feMorphology in="SourceAlpha" operator="dilate" radius="1.1" result="d1"/>
  <feComposite in="d2" in2="d1" operator="out" result="rg"/>
  <feFlood flood-color="#8c8c8c" result="fl"/>
  <feComposite in="fl" in2="rg" operator="in" result="rgc"/>
  <feGaussianBlur in="rgc" stdDeviation="0.7"/>
</filter></defs>
<g font-family="Liberation Sans" filter="url(#ring)">
  <text transform="translate(689.5,565) scale(0.78,1)" font-size="30" fill="#fff" letter-spacing="2">render</text>
  <text transform="translate(771,565) scale(0.9,1)" font-size="22" fill="#fff" letter-spacing="1.6">.com.br</text>
</g>
<path d="M809.8 519.6L819.8 531.2L812.2 533.8z" fill="#3c3c3c"/>
<path d="M817.6 515.8L838.8 508.2V521.4L830.2 527.6z" fill="#3c3c3c"/>
<circle cx="824.6" cy="518.8" r="4.6" fill="#050505"/>
<g fill="none" stroke="#9a9a9a" stroke-width="1.3" filter="url(#glw)">
  <path d="M803 503.4L810.8 515"/>
  <path d="M805.6 517.2C816 512.4 828 507.6 840 504.6"/>
  <path d="M805.6 517.2L811 539.4L815.4 538.6L812.6 549"/>
  <path d="M840 527.4L834.6 532.4L840 535.6"/>
  <path d="M815 548C820 540 830 537 840 538"/>
</g>
<g fill="none" stroke="#8a8a8a" stroke-width="0.9">
  <path d="M803 503.4L810.8 515"/>
  <path d="M805.6 517.2C816 512.4 828 507.6 840 504.6"/>
  <path d="M805.6 517.2L811 539.4L815.4 538.6L812.6 549"/>
  <path d="M840 527.4L834.6 532.4L840 535.6"/>
  <path d="M815 548C820 540 830 537 840 538"/>
</g>
</svg>
</body></html>
